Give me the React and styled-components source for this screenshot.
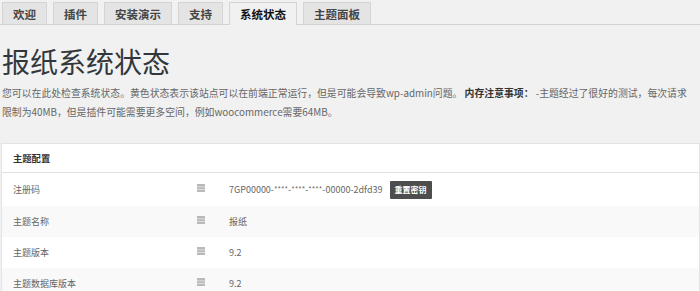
import React from 'react';
import styled, { createGlobalStyle } from 'styled-components';

const GlobalStyle = createGlobalStyle`
  html, body {
    margin: 0;
    padding: 0;
    background: #f1f1f1;
  }
  body {
    font-family: "Noto Sans CJK SC", "Noto Sans", sans-serif;
    color: #555;
  }
`;

const tabs = ['欢迎', '插件', '安装演示', '支持', '系统状态', '主题面板'];

const rows = [
  { label: '注册码', value: ['7GP00000-', '****', '-', '****', '-', '****', '-00000-2dfd39'], action: '重置密钥' },
  { label: '主题名称', value: ['报纸'] },
  { label: '主题版本', value: ['9.2'] },
  { label: '主题数据库版本', value: ['9.2'] },
];

const Page = styled.div`
  width: 700px;
  height: 291px;
  overflow: hidden;
  box-sizing: border-box;
`;

const TabBar = styled.nav`
  display: flex;
  align-items: flex-end;
  gap: 6px;
  height: 24px;
  padding-left: 2px;
  border-bottom: 1px solid #d2d2d2;
`;

const Tab = styled.div`
  box-sizing: border-box;
  height: ${p => (p.$active ? '23px' : '22px')};
  margin-bottom: ${p => (p.$active ? '-1px' : '0')};
  padding: 0 10px;
  display: flex;
  align-items: center;
  border: 1px solid #d4d4d4;
  border-bottom: none;
  background: ${p => (p.$active ? '#f1f1f1' : '#e4e4e4')};
  color: ${p => (p.$active ? '#111' : '#444')};
  font-size: 11.5px;
  font-weight: 700;
  white-space: nowrap;
`;

const Content = styled.main`
  padding: 0 2px;
`;

const Title = styled.h1`
  margin: 18px 0 0 0;
  font-size: 28px;
  line-height: 36px;
  font-weight: 400;
  color: #32373c;
`;

const Intro = styled.p`
  margin: 5px 0 0 0;
  width: 696px;
  font-size: 9.85px;
  line-height: 19px;
  color: #666;

  strong {
    color: #333;
    font-weight: 700;
  }
`;

const Panel = styled.section`
  margin: 21px 0 0 -1px;
  width: 697px;
  background: #fff;
  border: 1px solid #e3e3e3;
`;

const PanelHead = styled.div`
  height: 28px;
  display: flex;
  align-items: center;
  padding-left: 11px;
  border-bottom: 1px solid #e1e1e1;
  font-size: 9.3px;
  font-weight: 700;
  color: #333;
`;

const Row = styled.div`
  display: grid;
  grid-template-columns: 195px 32px 1fr;
  align-items: center;
  height: ${p => (p.$tall ? '33px' : '31px')};
  background: ${p => (p.$alt ? '#f9f9f9' : '#fff')};
  font-size: 9px;
  color: #666;
`;

const Label = styled.div`
  padding-left: 11px;
`;

const Value = styled.div`
  display: flex;
  align-items: center;
  gap: 7px;
`;

const Mask = styled.span`
  font-size: 7.5px;
  vertical-align: 1px;
`;

const HelpIcon = styled.svg`
  display: block;
  width: 8px;
  height: 8px;
  margin-top: -3px;
`;

const ResetButton = styled.button`
  height: 18px;
  padding: 0 5px;
  border: none;
  border-radius: 1px;
  background: #4d4d4d;
  color: #fff;
  font-family: "Noto Sans CJK SC", sans-serif;
  font-size: 8px;
  font-weight: 700;
`;

const Help = () => (
  <HelpIcon viewBox="0 0 8 8">
    <rect x="0" y="0" width="8" height="8" fill="#b9b9b9" />
    <rect x="0" y="2.5" width="8" height="0.8" fill="#e6e6e6" />
    <rect x="0" y="5" width="8" height="0.8" fill="#e6e6e6" />
  </HelpIcon>
);

export default function App() {
  return (
    <Page>
      <GlobalStyle />
      <TabBar>
        {tabs.map(t => (
          <Tab key={t} $active={t === '系统状态'}>{t}</Tab>
        ))}
      </TabBar>
      <Content>
        <Title>报纸系统状态</Title>
        <Intro>
          您可以在此处检查系统状态。黄色状态表示该站点可以在前端正常运行，但是可能会导致wp-admin问题。 <strong>内存注意事项：</strong> -主题经过了很好的测试，每次请求<br />限制为40MB，但是插件可能需要更多空间，例如woocommerce需要64MB。
        </Intro>
        <Panel>
          <PanelHead>主题配置</PanelHead>
          {rows.map((r, i) => (
            <Row key={r.label} $alt={i % 2 === 1} $tall={!!r.action}>
              <Label>{r.label}</Label>
              <div><Help /></div>
              <Value>
                <span>
                  {r.value.map((part, j) =>
                    part === '****' ? <Mask key={j}>{part}</Mask> : <React.Fragment key={j}>{part}</React.Fragment>
                  )}
                </span>
                {r.action && <ResetButton>{r.action}</ResetButton>}
              </Value>
            </Row>
          ))}
        </Panel>
      </Content>
    </Page>
  );
}
